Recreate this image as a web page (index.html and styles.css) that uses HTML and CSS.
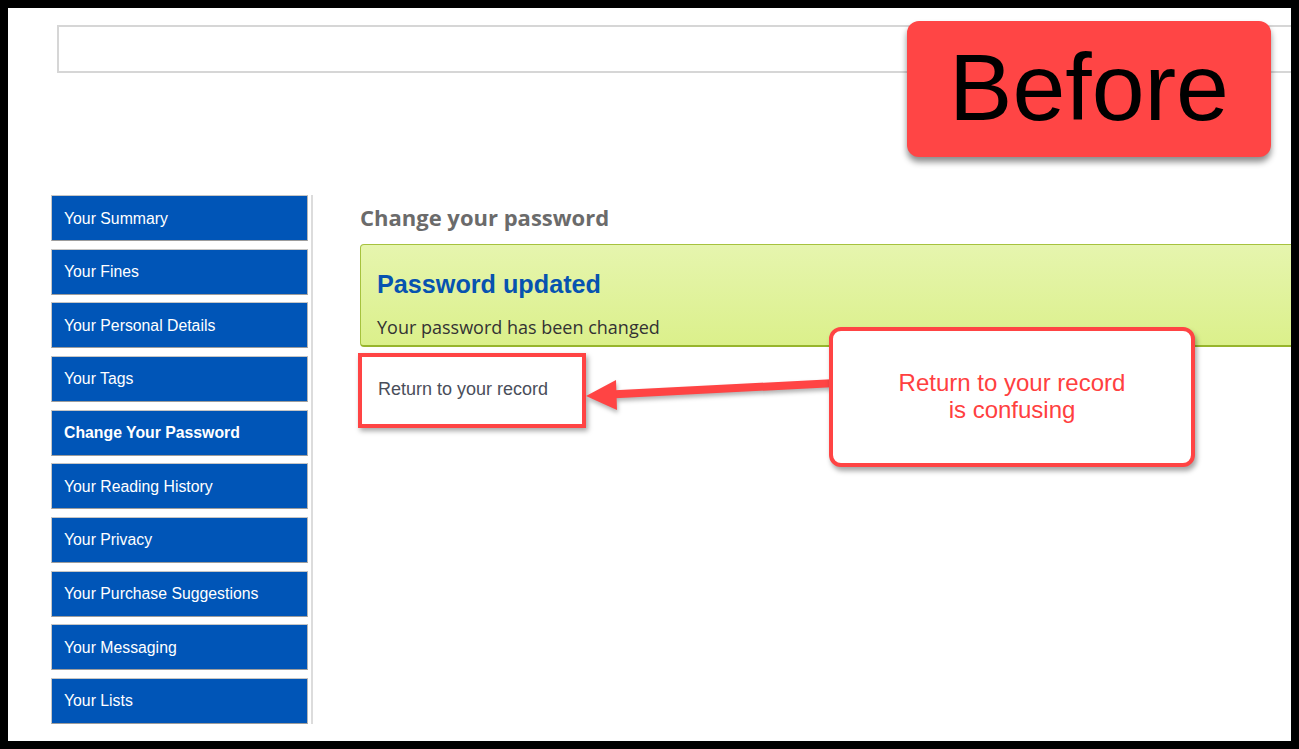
FILE: index.html
```html
<!DOCTYPE html>
<html lang="en">
<head>
<meta charset="utf-8">
<title>Change your password</title>
<link rel="stylesheet" href="styles.css">
</head>
<body>
<div class="frame">
  <header class="header">
    <div class="search"></div>
  </header>
  <div class="layout">
    <nav class="sidebar">
      <a class="nav-item" href="#">Your Summary</a>
      <a class="nav-item" href="#">Your Fines</a>
      <a class="nav-item" href="#">Your Personal Details</a>
      <a class="nav-item" href="#">Your Tags</a>
      <a class="nav-item active" href="#">Change Your Password</a>
      <a class="nav-item" href="#">Your Reading History</a>
      <a class="nav-item" href="#">Your Privacy</a>
      <a class="nav-item" href="#">Your Purchase Suggestions</a>
      <a class="nav-item" href="#">Your Messaging</a>
      <a class="nav-item" href="#">Your Lists</a>
    </nav>
    <main class="main">
      <h1 class="page-title">Change your password</h1>
      <div class="alert">
        <h2 class="alert-title">Password updated</h2>
        <p class="alert-text">Your password has been changed</p>
      </div>
      <a class="record-link" href="#">Return to your record</a>
    </main>
  </div>

  <div class="badge">Before</div>
  <div class="highlight"></div>
  <svg class="arrow" width="270" height="50" viewBox="570 370 270 50" xmlns="http://www.w3.org/2000/svg">
    <line x1="836" y1="383" x2="610" y2="394.5" stroke="#ff4444" stroke-width="8"/>
    <polygon points="586,396 616,380 617,410" fill="#ff4444"/>
  </svg>
  <div class="callout">Return to your record<br>is confusing</div>
</div>
</body>
</html>
```

FILE: styles.css
```css
* { box-sizing: border-box; }

html, body {
  margin: 0;
  padding: 0;
  background: #000;
}

body {
  font-family: "Liberation Sans", Arial, sans-serif;
}

.frame {
  position: relative;
  margin: 8px;
  width: 1283px;
  height: 733px;
  background: #fff;
  overflow: hidden;
}

.header {
  padding: 17px 0 0 49px;
}

.search {
  width: 1300px;
  height: 48px;
  border: 2px solid #d6d6d6;
  background: #fff;
}

.layout {
  display: flex;
  margin-top: 122px;
}

.sidebar {
  display: flex;
  flex-direction: column;
  gap: 7.67px;
  margin-left: 43px;
  width: 262px;
  padding-right: 3px;
  border-right: 2px solid #dcdcdc;
}

.nav-item {
  display: flex;
  align-items: center;
  height: 46px;
  padding: 1px 0 0 12px;
  background: #0055b7;
  border: 1px solid #c6c6c6;
  border-bottom-color: #9c9c9c;
  border-right-color: #b5b5b5;
  color: #fff;
  font-size: 15.8px;
  text-decoration: none;
}

.nav-item.active {
  font-weight: bold;
}

.main {
  flex: 1;
  margin-left: 47px;
  margin-right: -60px;
}

.page-title {
  margin: 8px 0 13px;
  font-family: "Open Sans", sans-serif;
  font-size: 22px;
  line-height: 28px;
  font-weight: bold;
  color: #6b6b6b;
}

.alert {
  height: 103px;
  padding: 24px 16px 0;
  border: 1px solid #a6c23e;
  border-bottom: 2px solid #97b52c;
  border-radius: 4px;
  background: linear-gradient(#e6f5ae, #dbf08b);
}

.alert-title {
  margin: 0;
  font-size: 25.2px;
  line-height: 30px;
  font-weight: bold;
  color: #0753b0;
}

.alert-text {
  margin: 16px 0 0;
  font-family: "Open Sans", sans-serif;
  font-size: 18px;
  line-height: 24px;
  color: #333;
}

.record-link {
  display: inline-block;
  margin: 30px 0 0 18px;
  font-size: 18px;
  line-height: 24px;
  color: #4a4e5a;
  text-decoration: none;
}

/* annotations */
.badge {
  position: absolute;
  left: 899px;
  top: 13px;
  width: 364px;
  height: 136px;
  display: flex;
  align-items: center;
  justify-content: center;
  padding-bottom: 4px;
  background: #ff4545;
  border-radius: 12px;
  box-shadow: 0 5px 6px rgba(0, 0, 0, 0.45);
  font-size: 95px;
  line-height: 1;
  color: #000;
}

.highlight {
  position: absolute;
  left: 350px;
  top: 345px;
  width: 228px;
  height: 75px;
  border: 4px solid #ff4444;
  box-shadow: 2px 3px 5px rgba(0, 0, 0, 0.35);
}

.arrow {
  position: absolute;
  left: 562px;
  top: 362px;
  overflow: visible;
  filter: drop-shadow(1px 3px 2px rgba(0, 0, 0, 0.3));
}

.callout {
  position: absolute;
  left: 821px;
  top: 319px;
  width: 366px;
  height: 140px;
  display: flex;
  align-items: center;
  justify-content: center;
  padding-bottom: 2px;
  text-align: center;
  background: #fff;
  border: 4px solid #ff4444;
  border-radius: 12px;
  box-shadow: 2px 4px 5px rgba(0, 0, 0, 0.35);
  font-size: 24px;
  line-height: 27px;
  color: #ff4040;
}
```
